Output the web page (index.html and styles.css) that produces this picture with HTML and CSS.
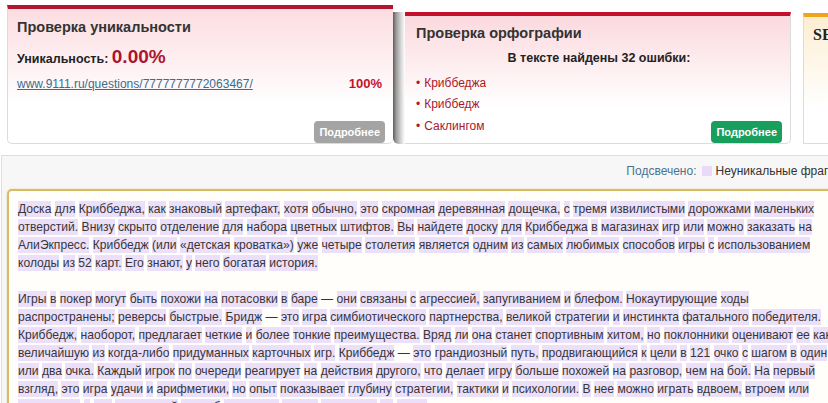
FILE: index.html
```html
<!DOCTYPE html>
<html lang="ru">
<head>
<meta charset="utf-8">
<title>Проверка текста</title>
<link rel="stylesheet" href="styles.css">
</head>
<body>
<div class="page">
  <div class="cards">
    <section class="card card-unique">
      <h2 class="card-title">Проверка уникальности</h2>
      <div class="uniq">Уникальность: <span class="uniq-value">0.00%</span></div>
      <div class="source">
        <a class="source-link" href="#">www.9111.ru/questions/7777777772063467/</a>
        <span class="source-pct">100%</span>
      </div>
      <a class="btn btn-gray" href="#">Подробнее</a>
    </section>
    <div class="spell-wrap">
      <section class="card card-spell">
        <h2 class="card-title">Проверка орфографии</h2>
        <div class="errors-head">В тексте найдены 32 ошибки:</div>
        <div class="spell-foot">
          <ul class="errors">
            <li>Криббеджа</li>
            <li>Криббедж</li>
            <li>Саклингом</li>
          </ul>
          <a class="btn btn-green" href="#">Подробнее</a>
        </div>
      </section>
    </div>
    <section class="card card-seo">
      <h2 class="card-title card-title-serif">SEO-анализ текста</h2>
    </section>
  </div>

  <div class="result">
    <div class="legend">
      <span class="legend-label">Подсвечено:</span>
      <span class="legend-swatch"></span>
      <span class="legend-text">Неуникальные фрагменты</span>
    </div>
    <div class="text-box">
      <p><mark>Доска</mark> <mark>для</mark> <mark>Криббеджа,</mark> <mark>как</mark> <mark>знаковый</mark> <mark>артефакт,</mark> <mark>хотя</mark> <mark>обычно,</mark> <mark>это</mark> <mark>скромная</mark> <mark>деревянная</mark> <mark>дощечка,</mark> <mark>с</mark> <mark>тремя</mark> <mark>извилистыми</mark> <mark>дорожками</mark> <mark>маленьких</mark> <mark>отверстий.</mark> <mark>Внизу</mark> <mark>скрыто</mark> <mark>отделение</mark> <mark>для</mark> <mark>набора</mark> <mark>цветных</mark> <mark>штифтов.</mark> <mark>Вы</mark> <mark>найдете</mark> <mark>доску</mark> <mark>для</mark> <mark>Криббеджа</mark> <mark>в</mark> <mark>магазинах</mark> <mark>игр</mark> <mark>или</mark> <mark>можно</mark> <mark>заказать</mark> <mark>на</mark> <mark>АлиЭкпресс.</mark> <mark>Криббедж</mark> <mark>(или</mark> <mark>«детская</mark> <mark>кроватка»)</mark> <mark>уже</mark> <mark>четыре</mark> <mark>столетия</mark> <mark>является</mark> <mark>одним</mark> <mark>из</mark> <mark>самых</mark> <mark>любимых</mark> <mark>способов</mark> <mark>игры</mark> <mark>с</mark> <mark>использованием</mark> <mark>колоды</mark> <mark>из</mark> <mark>52</mark> <mark>карт.</mark> <mark>Его</mark> <mark>знают,</mark> <mark>у</mark> <mark>него</mark> <mark>богатая</mark> <mark>история.</mark></p>
      <p><mark>Игры</mark> <mark>в</mark> <mark>покер</mark> <mark>могут</mark> <mark>быть</mark> <mark>похожи</mark> <mark>на</mark> <mark>потасовки</mark> <mark>в</mark> <mark>баре</mark> — <mark>они</mark> <mark>связаны</mark> <mark>с</mark> <mark>агрессией,</mark> <mark>запугиванием</mark> <mark>и</mark> <mark>блефом.</mark> <mark>Нокаутирующие</mark> <mark>ходы</mark> <mark>распространены;</mark> <mark>реверсы</mark> <mark>быстрые.</mark> <mark>Бридж</mark> — <mark>это</mark> <mark>игра</mark> <mark>симбиотического</mark> <mark>партнерства,</mark> <mark>великой</mark> <mark>стратегии</mark> <mark>и</mark> <mark>инстинкта</mark> <mark>фатального</mark> <mark>победителя.</mark> <mark>Криббедж,</mark> <mark>наоборот,</mark> <mark>предлагает</mark> <mark>четкие</mark> <mark>и</mark> <mark>более</mark> <mark>тонкие</mark> <mark>преимущества.</mark> <mark>Вряд</mark> <mark>ли</mark> <mark>она</mark> <mark>станет</mark> <mark>спортивным</mark> <mark>хитом,</mark> <mark>но</mark> <mark>поклонники</mark> <mark>оценивают</mark> <mark>ее</mark> <mark>как</mark> <mark>величайшую</mark> <mark>из</mark> <mark>когда-либо</mark> <mark>придуманных</mark> <mark>карточных</mark> <mark>игр.</mark> <mark>Криббедж</mark> — <mark>это</mark> <mark>грандиозный</mark> <mark>путь,</mark> <mark>продвигающийся</mark> <mark>к</mark> <mark>цели</mark> <mark>в</mark> <mark>121</mark> <mark>очко</mark> <mark>с</mark> <mark>шагом</mark> <mark>в</mark> <mark>один</mark> <mark>или</mark> <mark>два</mark> <mark>очка.</mark> <mark>Каждый</mark> <mark>игрок</mark> <mark>по</mark> <mark>очереди</mark> <mark>реагирует</mark> <mark>на</mark> <mark>действия</mark> <mark>другого,</mark> <mark>что</mark> <mark>делает</mark> <mark>игру</mark> <mark>больше</mark> <mark>похожей</mark> <mark>на</mark> <mark>разговор,</mark> <mark>чем</mark> <mark>на</mark> <mark>бой.</mark> <mark>На</mark> <mark>первый</mark> <mark>взгляд,</mark> <mark>это</mark> <mark>игра</mark> <mark>удачи</mark> <mark>и</mark> <mark>арифметики,</mark> <mark>но</mark> <mark>опыт</mark> <mark>показывает</mark> <mark>глубину</mark> <mark>стратегии,</mark> <mark>тактики</mark> <mark>и</mark> <mark>психологии.</mark> <mark>В</mark> <mark>нее</mark> <mark>можно</mark> <mark>играть</mark> <mark>вдвоем,</mark> <mark>втроем</mark> <mark>или</mark> <mark>вчетвером,</mark> <mark>и</mark> <mark>это</mark> <mark>идеальный</mark> <mark>способ</mark> <mark>скоротать</mark> <mark>вечер,</mark> <mark>например</mark> <mark>на</mark> <mark>даче.</mark></p>
    </div>
  </div>
</div>
</body>
</html>
```

FILE: styles.css
```css
html, body {
  margin: 0;
  padding: 0;
  overflow: hidden;
  background: #fff;
}

body {
  width: 828px;
  height: 403px;
  font-family: "Liberation Sans", Arial, sans-serif;
  font-size: 12px;
  color: #333;
}

.page {
  width: 1240px;
}

/* ---------- top cards ---------- */
.cards {
  display: flex;
  align-items: flex-end;
  height: 144px;
  padding-left: 7px;
}

.card {
  box-sizing: border-box;
  flex: 0 0 386px;
  width: 386px;
  display: flex;
  flex-direction: column;
  border-top: 4px solid #b3172f;
  border-bottom: 1px solid #dcdcdc;
}

.card-title {
  margin: 0;
  font-size: 14.5px;
  line-height: 18px;
  font-weight: bold;
  color: #333;
}

.card-title-serif {
  font-family: "Liberation Serif", "Times New Roman", serif;
  font-size: 16px;
  color: #222;
  white-space: nowrap;
}

.card-unique {
  height: 139px;
  padding: 9px 8px 0 9px;
  border-left: 1px solid #dcdcdc;
  border-radius: 0 0 5px 5px;
  background: linear-gradient(#fcdde1, #fff 72%);
}

.uniq {
  margin-top: 10px;
  font-size: 12.5px;
  font-weight: bold;
  line-height: 22px;
  color: #222;
}

.uniq-value {
  font-size: 19px;
  color: #ad1430;
}

.source {
  margin-top: 5px;
  padding-right: 3px;
  display: flex;
  justify-content: space-between;
  line-height: 18px;
}

.source-link {
  color: #3b6d8c;
  text-decoration: underline;
}

.source-pct {
  font-size: 13px;
  font-weight: bold;
  color: #c5122d;
}

.btn {
  display: block;
  height: 22px;
  line-height: 22px;
  padding: 0 5px;
  border-radius: 4px;
  color: #fff;
  font-size: 11px;
  font-weight: bold;
  text-decoration: none;
  white-space: nowrap;
}

.btn-gray {
  align-self: flex-end;
  margin-top: auto;
  background: #a4a4a4;
}

.btn-green {
  background: #189e5d;
}

.spell-wrap {
  box-sizing: border-box;
  flex: 0 0 398px;
  height: 132px;
  padding-left: 12px;
  border-radius: 0 0 0 6px;
  background: linear-gradient(90deg, #5c5c5c 0, #999 3px, #d6d6d6 8px, #fff 12px);
}

.card-spell {
  height: 132px;
  padding: 8px 8px 0 11px;
  border-top-color: #c5102c;
  border-right: 1px solid #dcdcdc;
  border-radius: 0 0 5px 0;
  background: linear-gradient(#fbd9de, #fff 72%);
}

.errors-head {
  margin-top: 7px;
  text-align: center;
  font-size: 12.5px;
  font-weight: bold;
  line-height: 18px;
  color: #222;
}

.spell-foot {
  margin-top: auto;
  display: flex;
  align-items: flex-end;
  justify-content: space-between;
}

.errors {
  margin: 0 0 6px;
  padding: 0;
  list-style: none;
}

.errors li {
  line-height: 21.5px;
  color: #a8182d;
}

.errors li::before {
  content: "\2022";
  margin-right: 4px;
  color: #b3172f;
}

.card-seo {
  height: 131px;
  margin-left: 12px;
  padding: 9px 9px 0;
  border-top-color: #f0a31c;
  border-left: 1px solid #dcdcdc;
  background: linear-gradient(#fdeed2, #fff 72%);
}

/* ---------- result panel ---------- */
.result {
  margin: 11px 0 0 1px;
  width: 1100px;
  padding: 0 0 0 5px;
  border-top: 1px solid #dedede;
  border-left: 1px solid #dedede;
  background: #f7f7f7;
}

.legend {
  width: 857px;
  height: 30px;
  display: flex;
  align-items: center;
  justify-content: flex-end;
  white-space: nowrap;
}

.legend-label {
  color: #4a7290;
}

.legend-swatch {
  width: 10px;
  height: 10px;
  margin: 0 3px 0 6px;
  background: #e9dbf8;
}

.legend-text {
  color: #333;
}

.text-box {
  box-sizing: border-box;
  width: 840px;
  margin-top: 3px;
  padding: 9px;
  border: 2px solid #d8bb62;
  border-radius: 5px;
  box-shadow: 0 0 2px rgba(210, 180, 90, 0.5);
  background: #fffefa;
  font-size: 12.1px;
  line-height: 18px;
  color: #363636;
}

.text-box p {
  margin: 0 0 18px;
}

mark {
  padding: 1px 0;
  background: #ecdffa;
  color: inherit;
}
```
